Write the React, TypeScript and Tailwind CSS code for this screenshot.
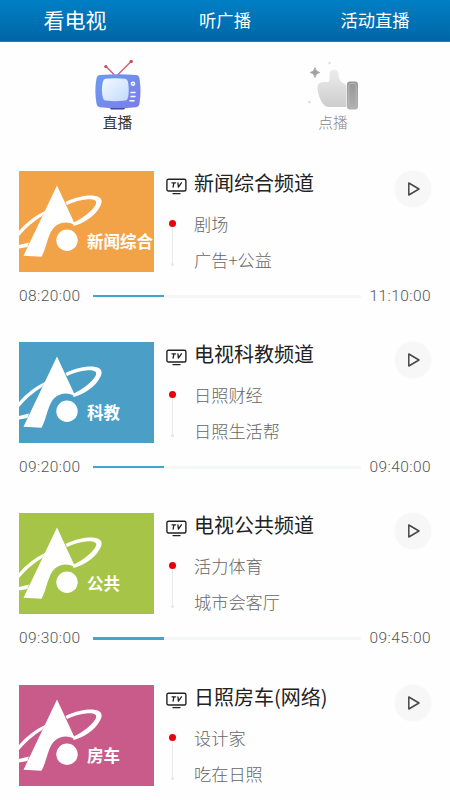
import React from 'react';

const channels = [{
  name: '新闻综合频道',
  label: '新闻综合',
  color: 'bg-[#f2a347]',
  programs: ['剧场', '广告+公益'],
  start: '08:20:00',
  end: '11:10:00'
}, {
  name: '电视科教频道',
  label: '科教',
  color: 'bg-[#4b9fc7]',
  programs: ['日照财经', '日照生活帮'],
  start: '09:20:00',
  end: '09:40:00'
}, {
  name: '电视公共频道',
  label: '公共',
  color: 'bg-[#a6c548]',
  programs: ['活力体育', '城市会客厅'],
  start: '09:30:00',
  end: '09:45:00'
}, {
  name: '日照房车(网络)',
  label: '房车',
  color: 'bg-[#c95b8b]',
  programs: ['设计家', '吃在日照']
}];

const RetroTv = () => <svg width="48" height="52" viewBox="0 0 48 52" fill="none">
    <defs>
      <linearGradient id="tvBody" x1="0" y1="0" x2="1" y2="1">
        <stop stopColor="#6b9cf0" />
        <stop offset="1" stopColor="#7b7cec" />
      </linearGradient>
      <linearGradient id="tvScreen" x1="0" y1="0" x2="1" y2="1">
        <stop stopColor="#f3f9ff" />
        <stop offset="1" stopColor="#c3dafc" />
      </linearGradient>
    </defs>
    <path d="M20.500 16 12 7.500M23.500 16 37 2.500" stroke="#d6616d" strokeWidth="1.500" />
    <circle cx="11.800" cy="7.500" r="1.600" fill="#c94e5c" />
    <circle cx="37.200" cy="2.500" r="1.700" fill="#c94e5c" />
    <path d="M15 48h17l-2 2.500H17z" fill="#39408f" />
    <path d="M6 16Q24 14.500 42 16 45 16.200 45.500 19.500 47.500 32 45.500 44.500 45 47.700 42 48.300 24 50 6 48.300 3 47.700 2.500 44.500.2 32 2.500 19.500 3 16.200 6 16Z" fill="url(#tvBody)" />
    <path d="M11.500 19.800Q21 18.500 31 19.800 33.500 20.200 34 23 35.500 31.500 34 38.500 33.500 41 31 41.500 21 42.800 11.500 41.500 9.300 41 8.800 38.500 7 31 8.800 23 9.300 20.200 11.500 19.800Z" fill="url(#tvScreen)" />
    <circle cx="39" cy="24.800" r="2.300" fill="#fff" />
    <circle cx="39" cy="24.800" r=".8" fill="#718aed" />
    <path d="M36.500 33.500h5M36.500 37.500h5M35.500 41.800h5" stroke="#fff" strokeWidth="1.500" />
  </svg>;

const ThumbUp = () => <svg width="52" height="52" viewBox="0 0 52 52" fill="none">
    <defs>
      <linearGradient id="hand" x1="0" y1="0" x2="0" y2="1">
        <stop stopColor="#ececec" />
        <stop offset="1" stopColor="#cdcdcd" />
      </linearGradient>
      <linearGradient id="cuff" x1="0" y1="0" x2="0" y2="1">
        <stop stopColor="#969696" />
        <stop offset="1" stopColor="#b1b1b1" />
      </linearGradient>
    </defs>
    <path d="M8 8.500Q8.600 12.800 12.800 13.500 8.600 14.200 8 18.500 7.400 14.200 3.200 13.500 7.400 12.800 8 8.500Z" fill="#a0a0a0" stroke="#a0a0a0" strokeWidth=".8" />
    <circle cx="22.500" cy="4" r="1.200" fill="#dedede" />
    <circle cx="2.500" cy="43" r="1.200" fill="#d6d6d6" />
    <path d="M22.500 15C22.500 9 31.200 9 31.500 15 31.600 20 33 23 39.500 26V48H21Q17.500 47.500 15.700 44.500 11.500 38 10.500 30 9.800 23.500 15.500 23H20.500Q22.500 23 22.500 20Z" fill="url(#hand)" />
    <rect x="40" y="22.500" width="11" height="28" rx="3" fill="url(#cuff)" />
    <rect x="41.800" y="24.500" width="7.400" height="24" rx="2" stroke="#b7b7b7" />
  </svg>;

const StationLogo = () => <svg className="absolute inset-0" width="135" height="101" viewBox="0 0 135 101" fill="#fff">
    <path d="M0 60Q11 47 27 39.500L23 45Q10 53 0 65Z" />
    <path d="M46.500 31C58 25.500 69 24 75 24.700 84 25.500 84 31 80.500 36.500 75.500 45 65 52.500 54.500 55L54 52C64 47 73 40 76.500 34 79 29.500 75 28 69 28.200 61 29 54 31 48 34Z" />
    <path d="M0 74 10 71.500 8.500 76 0 77.600Z" />
    <path d="M38 14.500 56.500 54.500C50 50.500 42 50.500 36 55.500 29 61 28 76 22.500 85.800L4.500 84.800Z" />
    <circle cx="48" cy="69.300" r="10.700" />
  </svg>;

const TvIcon = () => <svg width="21" height="17" viewBox="0 0 21 17" fill="none" stroke="#222" strokeLinecap="round" strokeLinejoin="round">
    <rect x=".9" y="1.200" width="19" height="11.800" rx="1.500" strokeWidth="1.400" />
    <path d="M6 4.800h3.600M7.900 4.800 7.100 9.200M11.900 4.800l.5 4.300L15.400 4.800" strokeWidth="1.300" />
    <path d="M7 15.600h7" strokeWidth="1.400" />
  </svg>;

const PlayButton = () => <button className="flex h-9 w-9 items-center justify-center rounded-full bg-[#f7f7f7] shadow-[0_0_3px_#f7f7f7]">
    <svg className="ml-px" width="14" height="16" viewBox="0 0 14 16" fill="none">
      <path d="M1.800 2v12L12 8Z" stroke="#484848" strokeWidth="1.500" strokeLinejoin="round" />
    </svg>
  </button>;

const ChannelCard = ({
  name,
  label,
  color,
  programs,
  start,
  end
}: any) => <section className="px-[19px]">
    <div className="flex h-[101px]">
      <div className={`relative w-[135px] shrink-0 overflow-hidden ${color}`}>
        <StationLogo />
        <span className="absolute left-[68px] top-[58px] whitespace-nowrap text-[16.500px] font-bold leading-6 text-white">{label}</span>
      </div>
      <div className="flex w-[40px] shrink-0 flex-col items-center pl-[4px] pt-[7px]">
        <TvIcon />
        <div className="mr-[7px] mt-[25px] h-[7px] w-[7px] rounded-full bg-[#e8000b]" />
        <div className="mr-[7px] h-[36px] w-px bg-[#e9e9e9]" />
        <div className="mr-[7px] h-[3px] w-[3px] rounded-full bg-[#e6e6e6]" />
      </div>
      <div className="min-w-0 flex-1 whitespace-nowrap">
        <h2 className="h-[35px] text-[20px] leading-[24px] text-[#222]">{name}</h2>
        {programs.map((program: string) => <p key={program} className="h-9 text-[17.200px] leading-9 font-light text-[#666]">{program}</p>)}
      </div>
      <PlayButton />
    </div>
    {start && <div className="flex h-[70.300px] items-start justify-between pt-[13px] text-[15.500px] leading-[22px] text-[#888]">
      <span className="w-[74px] font-[Roboto] font-light tracking-[0.420px] text-[#555]">{start}</span>
      <div className="mt-[10px] h-[3px] w-[268px] rounded-full bg-[#f5f6f6]">
        <div className="h-[2.500px] w-[71px] bg-[#40a5d3]" />
      </div>
      <span className="w-[70px] text-right font-[Roboto] font-light tracking-[0.420px] text-[#555]">{end}</span>
    </div>}
  </section>;

export default function App() {
  return <main className="h-[800px] w-[450px] overflow-hidden bg-[#fefefe] font-['Noto_Sans_CJK_SC',sans-serif]">
      <header className="flex h-[42px] items-center border-b border-[#38749c] bg-linear-to-b from-[#007fc5] to-[#0066a5] pb-[2px] text-center text-white">
        <div className="w-[150px] text-[21px]">看电视</div>
        <div className="w-[150px] text-[17.300px]">听广播</div>
        <div className="w-[150px] text-[17.300px]">活动直播</div>
      </header>
      <nav className="flex h-[128.700px] pt-[17px] text-[14.700px] leading-5">
        <button className="flex w-[235px] flex-col items-center text-[#333]">
          <RetroTv />
          <span className="mt-px">直播</span>
        </button>
        <button className="flex w-[196px] flex-col items-center font-light text-[#888]">
          <ThumbUp />
          <span className="mt-px">点播</span>
        </button>
      </nav>
      {channels.map(channel => <ChannelCard key={channel.name} {...channel} />)}
    </main>;
}
